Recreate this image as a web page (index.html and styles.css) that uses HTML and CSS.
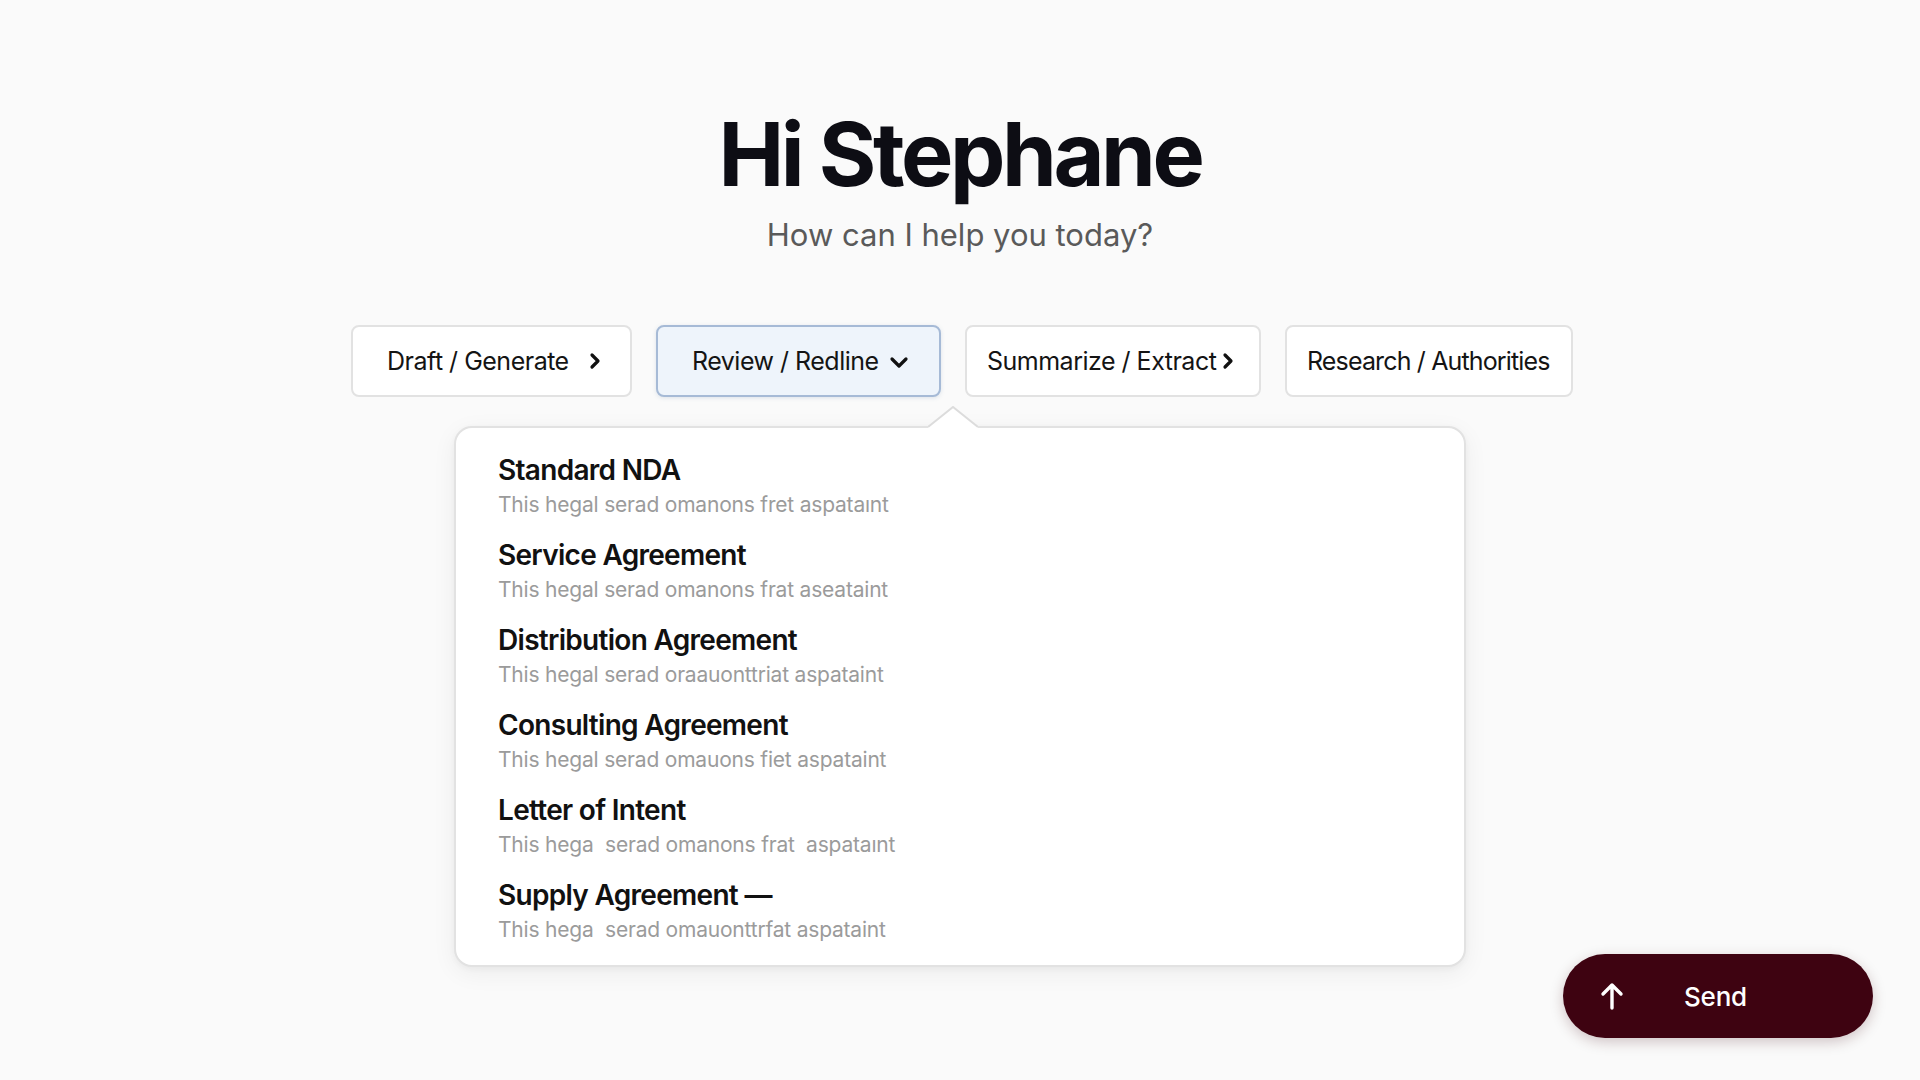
FILE: index.html
```html
<!DOCTYPE html>
<html lang="en">
<head>
<meta charset="utf-8">
<title>Hi Stephane</title>
<link rel="stylesheet" href="styles.css">
</head>
<body>
<main class="page">
  <header class="hero">
    <h1 class="hero-title">Hi Stephane</h1>
    <p class="hero-sub">How can I help you today?</p>
  </header>

  <nav class="chips">
    <button class="chip chip-draft">
      <span>Draft / Generate</span>
      <svg class="chev-right" viewBox="0 0 12 18" width="12" height="18"><path d="M3 3 L9 9 L3 15" fill="none" stroke="#111" stroke-width="3.2" stroke-linecap="round" stroke-linejoin="round"/></svg>
    </button>
    <button class="chip chip-review is-active">
      <span>Review / Redline</span>
      <svg class="chev-down" viewBox="0 0 20 14" width="20" height="14"><path d="M3 4 L10 11 L17 4" fill="none" stroke="#111" stroke-width="3.2" stroke-linecap="round" stroke-linejoin="round"/></svg>
    </button>
    <button class="chip chip-summarize">
      <span>Summarize / Extract</span>
      <svg class="chev-right" viewBox="0 0 12 18" width="12" height="18"><path d="M3 3 L9 9 L3 15" fill="none" stroke="#111" stroke-width="3.2" stroke-linecap="round" stroke-linejoin="round"/></svg>
    </button>
    <button class="chip chip-research">
      <span>Research / Authorities</span>
    </button>
  </nav>

  <section class="menu">
    <svg class="menu-caret" viewBox="0 0 50 24" width="50" height="24">
      <path d="M0 24 L0 21 L25 1 L50 21 L50 24 Z" fill="#ffffff"/>
      <path d="M0 21 L25 1 L50 21" fill="none" stroke="#dcdcdc" stroke-width="2"/>
    </svg>
    <ul class="menu-list">
      <li class="menu-item">
        <div class="menu-title">Standard NDA</div>
        <div class="menu-desc">This hegal serad omanons fret aspataınt</div>
      </li>
      <li class="menu-item">
        <div class="menu-title">Service Agreement</div>
        <div class="menu-desc">This hegal serad omanons frat aseataint</div>
      </li>
      <li class="menu-item">
        <div class="menu-title">Distribution Agreement</div>
        <div class="menu-desc">This hegal serad oraauonttriat aspataint</div>
      </li>
      <li class="menu-item">
        <div class="menu-title">Consulting Agreement</div>
        <div class="menu-desc">This hegal serad omauons fiet aspataint</div>
      </li>
      <li class="menu-item">
        <div class="menu-title">Letter of Intent</div>
        <div class="menu-desc">This hega&nbsp; serad omanons frat&nbsp; aspataınt</div>
      </li>
      <li class="menu-item">
        <div class="menu-title">Supply Agreement —</div>
        <div class="menu-desc">This hega&nbsp; serad omauonttrfat aspataint</div>
      </li>
    </ul>
  </section>

  <button class="send">
    <svg class="send-icon" viewBox="0 0 24 28" width="24" height="28"><path d="M12 26 L12 3 M3 12 L12 3 L21 12" fill="none" stroke="#ffffff" stroke-width="3.4" stroke-linecap="round" stroke-linejoin="round"/></svg>
    <span class="send-label">Send</span>
  </button>
</main>
</body>
</html>
```

FILE: styles.css
```css
* { box-sizing: border-box; }

html, body {
  margin: 0;
  padding: 0;
}

body {
  width: 1920px;
  height: 1080px;
  overflow: hidden;
  background: #fafafa;
  font-family: Inter, "Noto Sans", sans-serif;
  color: #111;
}

.page {
  position: relative;
  height: 1080px;
  display: flex;
  flex-direction: column;
  align-items: center;
  padding-top: 110px;
}

.hero {
  display: flex;
  flex-direction: column;
  align-items: center;
}

.hero-title {
  margin: 0;
  font-size: 88px;
  line-height: 88px;
  font-weight: 700;
  letter-spacing: -3.4px;
  color: #0d0d14;
}

.hero-sub {
  margin: 19px 0 0;
  font-size: 31px;
  line-height: 36px;
  font-weight: 400;
  color: #5a5a5a;
}

.chips {
  margin-top: 72px;
  display: flex;
  gap: 24px;
  margin-left: 4px;
}

.chip {
  height: 72px;
  display: flex;
  align-items: center;
  justify-content: flex-start;
  padding: 0;
  background: #ffffff;
  border: 2px solid #e2e2e2;
  border-radius: 8px;
  font-family: Inter, "Noto Sans", sans-serif;
  font-size: 25px;
  font-weight: 400;
  letter-spacing: -0.5px;
  color: #141414;
  white-space: nowrap;
  cursor: pointer;
}

.chip span { flex: none; }
.chip svg { flex: none; }

.chip-draft { width: 281px; padding-left: 34px; gap: 20px; }
.chip-review { width: 285px; padding-left: 34px; gap: 10px; }
.chip-summarize { width: 296px; padding-left: 20px; gap: 6px; }
.chip-research { width: 288px; padding-left: 20px; letter-spacing: -0.85px; }

.chip.is-active {
  background: #eef4fb;
  border-color: #a6bad6;
  box-shadow: 0 1px 4px rgba(90, 120, 160, 0.18);
}

.chev-down { margin-top: 2px; }

.menu {
  position: relative;
  margin-top: 29px;
  width: 1012px;
  height: 541px;
  background: #ffffff;
  border: 2px solid #e2e2e2;
  border-radius: 18px;
  box-shadow: 0 6px 24px rgba(0, 0, 0, 0.06), 0 2px 6px rgba(0, 0, 0, 0.04);
  padding: 25px 42px 0;
}

.menu-caret {
  position: absolute;
  left: 472px;
  top: -22px;
}

.menu-list {
  list-style: none;
  margin: 0;
  padding: 0;
  display: flex;
  flex-direction: column;
  gap: 19px;
}

.menu-item {
  display: flex;
  flex-direction: column;
  gap: 4px;
}

.menu-title {
  font-size: 28px;
  line-height: 34px;
  font-weight: 600;
  letter-spacing: -0.7px;
  color: #111111;
}

.menu-desc {
  font-size: 21px;
  line-height: 28px;
  font-weight: 400;
  letter-spacing: -0.2px;
  color: #9b9b9b;
  white-space: pre;
}

.send {
  position: absolute;
  right: 47px;
  bottom: 42px;
  width: 310px;
  height: 84px;
  border: none;
  border-radius: 42px;
  background: #3e0311;
  box-shadow: 0 4px 14px rgba(60, 0, 15, 0.22);
  display: flex;
  align-items: center;
  padding-left: 37px;
  cursor: pointer;
}

.send-icon { flex: none; }

.send-label {
  margin-left: 60px;
  font-family: Inter, "Noto Sans", sans-serif;
  font-size: 26px;
  font-weight: 500;
  color: #ffffff;
  letter-spacing: -0.2px;
}
```
